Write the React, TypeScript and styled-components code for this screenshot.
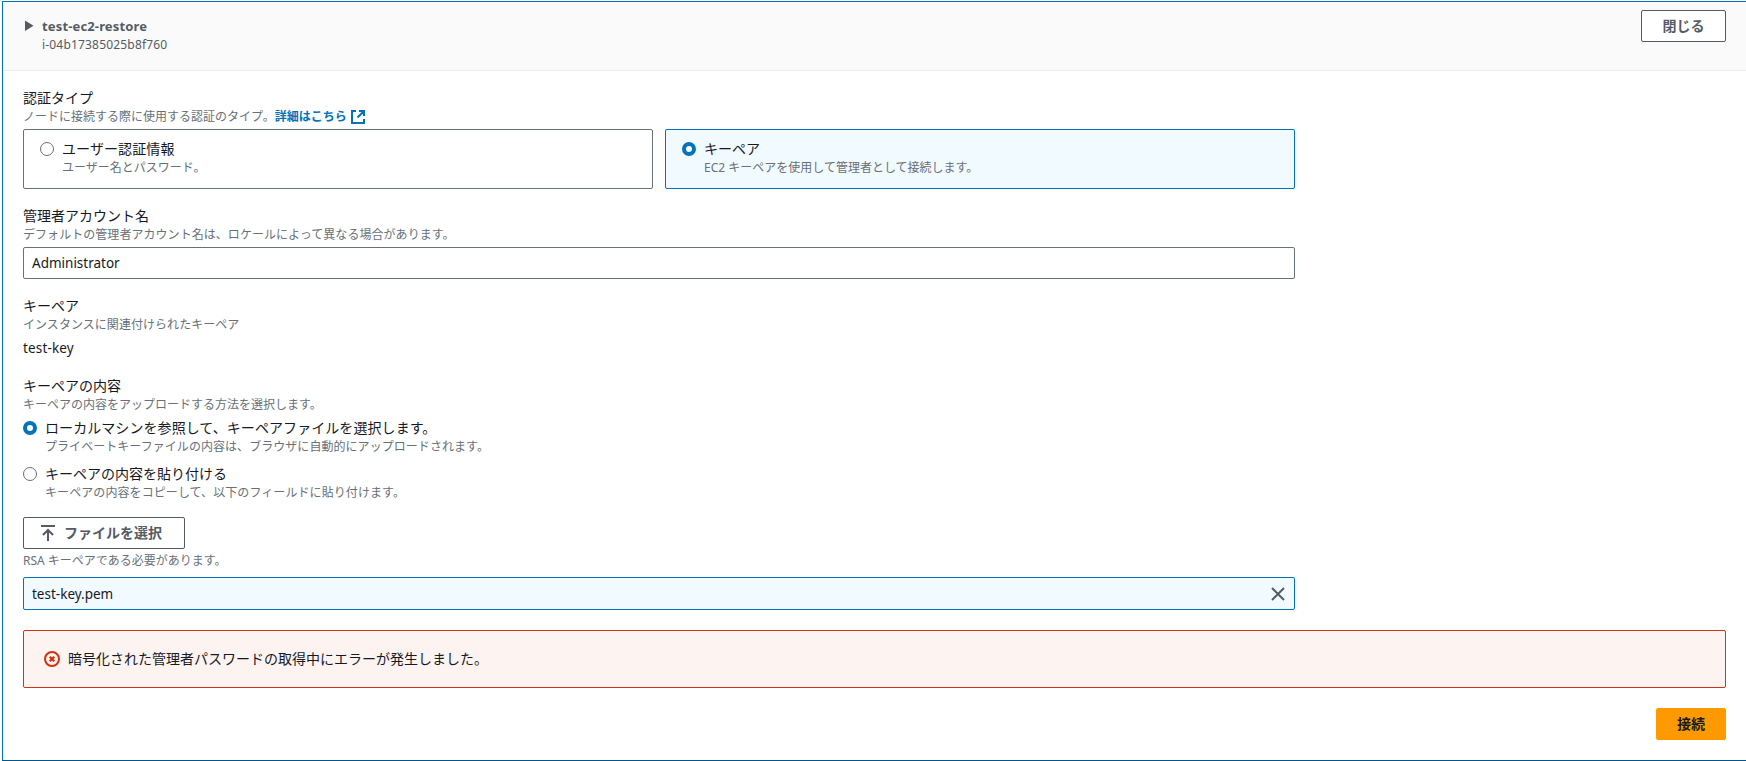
import React from "react";
import styled, { createGlobalStyle, css } from "styled-components";

const jp = `"Noto Sans", "Noto Sans CJK JP", sans-serif`;

const GlobalStyle = createGlobalStyle`
  *, *::before, *::after { box-sizing: border-box; }
  body {
    margin: 0;
    background: #fff;
    color: #16191f;
    font-family: ${jp};
    font-size: 14px;
    line-height: 22px;
    overflow: hidden;
  }
`;

const Panel = styled.section`
  margin: 1px 0 0 2px;
  height: 760px;
  border: 1px solid #0073bb;
  border-right: 0;
  border-bottom-color: #00578c;
  background: #fff;
`;

const Header = styled.header`
  display: flex;
  justify-content: space-between;
  align-items: flex-start;
  height: 69px;
  padding: 8px 20px 0 20px;
  border-bottom: 1px solid #eaeded;
  background: #fafafa;
`;

const Heading = styled.div`
  display: flex;
  gap: 8px;
  padding-top: 5px;
  color: #545b64;
`;

const Caret = styled.svg`
  width: 11px;
  height: 22px;
  fill: #545b64;
`;

const Title = styled.div`
  font-weight: 700;
  font-size: 13px;
  letter-spacing: 0.15px;
`;

const InstanceId = styled.div`
  font-size: 12px;
  line-height: 16px;
  letter-spacing: 0.18px;
`;

const Body = styled.main`
  padding: 16px 20px 0 20px;
`;

const Form = styled.div`
  display: flex;
  flex-direction: column;
  width: 1272px;
`;

const Field = styled.section<{ $after?: number }>`
  margin-bottom: ${(p) => p.$after ?? 16}px;
`;

const Label = styled.div<{ $track?: number }>`
  height: 22px;
  letter-spacing: ${(p) => p.$track ?? 0}px;
  white-space: nowrap;
`;

const Hint = styled.div<{ $track?: number }>`
  height: 16px;
  font-size: 12px;
  line-height: 16px;
  letter-spacing: ${(p) => p.$track ?? 0}px;
  color: #687078;
  white-space: nowrap;
`;

const Constraint = styled(Hint)`
  margin-top: 4px;
`;

const Link = styled.a`
  display: inline-flex;
  align-items: center;
  gap: 4px;
  color: #0073bb;
  font-weight: 700;
  vertical-align: top;
`;

const Tiles = styled.div`
  display: grid;
  grid-template-columns: 1fr 1fr;
  gap: 12px;
  margin-top: 4px;
`;

const selected = css`
  border-color: #0073bb;
  background: #f1faff;
`;

const Tile = styled.label<{ $selected?: boolean }>`
  display: flex;
  height: 60px;
  padding: 8px 16px;
  border: 1px solid #687078;
  border-radius: 2px;
  ${(p) => p.$selected && selected}
`;

const Choice = styled.label<{ $after?: number }>`
  display: flex;
  margin-bottom: ${(p) => p.$after ?? 0}px;
`;

const Radio = styled.span<{ $checked?: boolean }>`
  flex: none;
  width: 14px;
  height: 14px;
  margin: 4px 8px 0 0;
  border: ${(p) => (p.$checked ? "4px solid #0073bb" : "1px solid #687078")};
  border-radius: 50%;
  background: #fff;
`;

const TextBox = styled.div`
  display: flex;
  align-items: center;
  height: 32px;
  margin-top: 4px;
  padding: 0 8px;
  border: 1px solid #687078;
  border-radius: 2px;
`;

const Latin = styled.span<{ $track?: number }>`
  font-size: 13.5px;
  letter-spacing: ${(p) => p.$track ?? 0}px;
`;

const Value = styled.div`
  margin-top: 4px;
`;

const Choices = styled.div`
  margin-top: 4px;
`;

const Token = styled(TextBox)`
  justify-content: space-between;
  height: 33px;
  margin-top: 8px;
  ${selected}
`;

const Button = styled.button<{ $primary?: boolean; $icon?: boolean; $minWidth?: number }>`
  display: inline-flex;
  align-items: center;
  justify-content: center;
  gap: 8px;
  min-width: ${(p) => p.$minWidth ?? 0}px;
  height: 32px;
  padding: 0 20px 0 ${(p) => (p.$icon ? 16 : 20)}px;
  border: 1px solid ${(p) => (p.$primary ? "#ff9900" : "#545b64")};
  border-radius: 2px;
  background: ${(p) => (p.$primary ? "#ff9900" : "#fff")};
  color: ${(p) => (p.$primary ? "#16191f" : "#545b64")};
  font: 700 14px/20px ${jp};
  white-space: nowrap;
`;

const FileButton = styled(Button)`
  display: flex;
  justify-content: flex-start;
  width: 162px;
`;

const Alert = styled.div`
  display: flex;
  align-items: center;
  gap: 8px;
  height: 58px;
  margin-top: 20px;
  padding: 0 20px;
  border: 1px solid #d13212;
  border-radius: 2px;
  background: #fdf3f1;
`;

const Actions = styled.footer`
  display: flex;
  justify-content: flex-end;
  margin-top: 20px;
`;

const ExternalIcon = () => (
  <svg width="14" height="14" viewBox="0 0 14 14" fill="none" stroke="#0073bb" strokeWidth="2">
    <path d="M5 1H1v12h12V9M8 1h5v5M13 1 6.5 7.5" />
  </svg>
);

const UploadIcon = () => (
  <svg width="16" height="16" viewBox="0 0 16 16" fill="none" stroke="#545b64" strokeWidth="2">
    <path d="M1 1h14M8 16V6M3 10 8 5l5 5" />
  </svg>
);

const CloseIcon = () => (
  <svg width="16" height="16" viewBox="0 0 16 16" fill="none" stroke="#545b64" strokeWidth="2">
    <path d="m2 2 12 12M14 2 2 14" />
  </svg>
);

const ErrorIcon = () => (
  <svg width="16" height="16" viewBox="0 0 16 16" fill="none" stroke="#d13212" strokeWidth="2">
    <circle cx="8" cy="8" r="7" />
    <path d="m5.7 5.7 4.6 4.6M10.3 5.7l-4.6 4.6" strokeWidth="2.3" />
  </svg>
);

export default function App() {
  return (
    <>
      <GlobalStyle />
      <Panel>
        <Header>
          <Heading>
            <Caret viewBox="0 0 11 22">
              <path d="M2 5.5v10.500l8.500-5.250z" />
            </Caret>
            <div>
              <Title>test-ec2-restore</Title>
              <InstanceId>i-04b17385025b8f760</InstanceId>
            </div>
          </Heading>
          <Button $minWidth={85}>閉じる</Button>
        </Header>
        <Body>
          <Form>
            <Field>
              <Label>認証タイプ</Label>
              <Hint>
                ノードに接続する際に使用する認証のタイプ。
                <Link>
                  詳細はこちら
                  <ExternalIcon />
                </Link>
              </Hint>
              <Tiles>
                <Tile>
                  <Radio />
                  <div>
                    <Label $track={0.1}>ユーザー認証情報</Label>
                    <Hint>ユーザー名とパスワード。</Hint>
                  </div>
                </Tile>
                <Tile $selected>
                  <Radio $checked />
                  <div>
                    <Label>キーペア</Label>
                    <Hint>EC2 キーペアを使用して管理者として接続します。</Hint>
                  </div>
                </Tile>
              </Tiles>
            </Field>
            <Field>
              <Label>管理者アカウント名</Label>
              <Hint $track={0.05}>
                デフォルトの管理者アカウント名は、ロケールによって異なる場合があります。
              </Hint>
              <TextBox>
                <Latin>Administrator</Latin>
              </TextBox>
            </Field>
            <Field>
              <Label>キーペア</Label>
              <Hint $track={0.05}>インスタンスに関連付けられたキーペア</Hint>
              <Value>
                <Latin $track={0.15}>test-key</Latin>
              </Value>
            </Field>
            <Field>
              <Label>キーペアの内容</Label>
              <Hint>キーペアの内容をアップロードする方法を選択します。</Hint>
              <Choices>
                <Choice $after={8}>
                  <Radio $checked />
                  <div>
                    <Label $track={0.07}>
                      ローカルマシンを参照して、キーペアファイルを選択します。
                    </Label>
                    <Hint $track={0.05}>
                      プライベートキーファイルの内容は、ブラウザに自動的にアップロードされます。
                    </Hint>
                  </div>
                </Choice>
                <Choice>
                  <Radio />
                  <div>
                    <Label>キーペアの内容を貼り付ける</Label>
                    <Hint $track={0.08}>
                      キーペアの内容をコピーして、以下のフィールドに貼り付けます。
                    </Hint>
                  </div>
                </Choice>
              </Choices>
            </Field>
            <Field $after={0}>
              <FileButton $icon>
                <UploadIcon />
                ファイルを選択
              </FileButton>
              <Constraint>RSA キーペアである必要があります。</Constraint>
              <Token>
                <Latin>test-key.pem</Latin>
                <CloseIcon />
              </Token>
            </Field>
          </Form>
          <Alert>
            <ErrorIcon />
            暗号化された管理者パスワードの取得中にエラーが発生しました。
          </Alert>
          <Actions>
            <Button $primary>接続</Button>
          </Actions>
        </Body>
      </Panel>
    </>
  );
}
